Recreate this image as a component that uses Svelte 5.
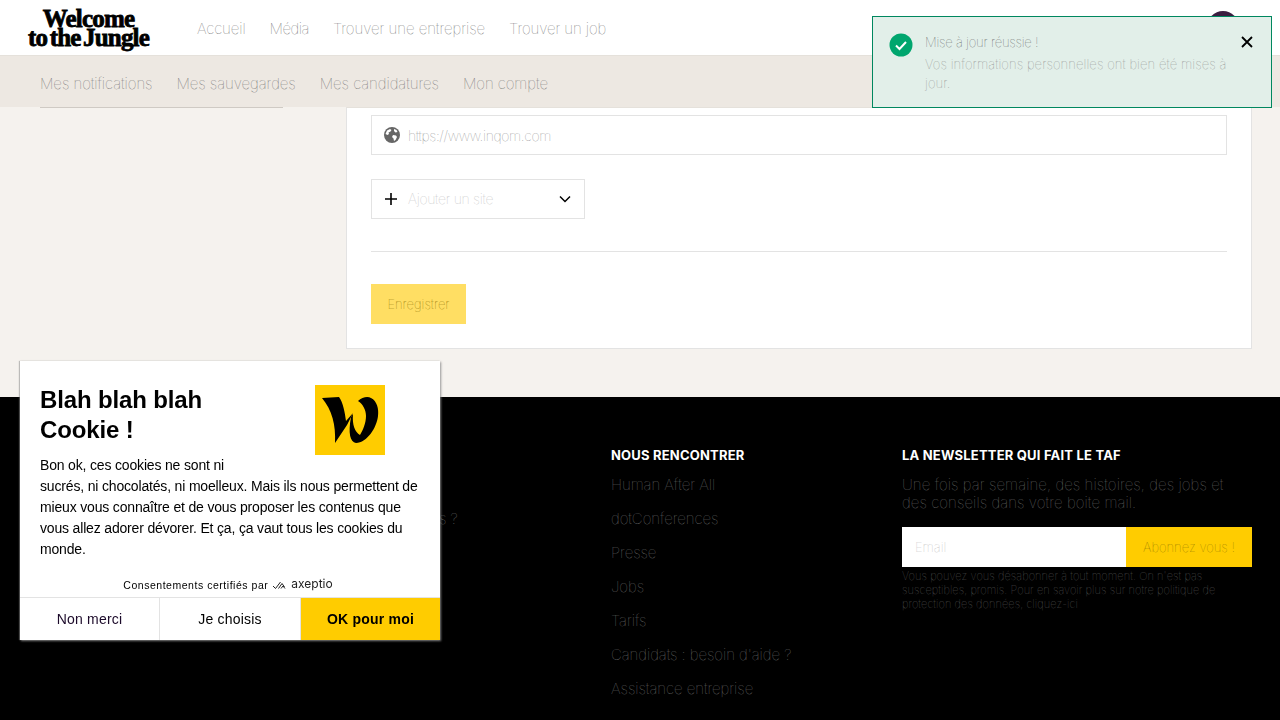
<script>
  const nav = ['Accueil', 'Média', 'Trouver une entreprise', 'Trouver un job'];
  const sub = ['Mes notifications', 'Mes sauvegardes', 'Mes candidatures', 'Mon compte'];
  const meet = ['Human After All', 'dotConferences', 'Presse', 'Jobs', 'Tarifs', 'Candidats : besoin d\'aide ?', 'Assistance entreprise'];
</script>

<header class="top">
  <div class="logo"><span>Welcome</span><span>to the Jungle</span></div>
  <nav class="mainnav">
    {#each nav as n}<span>{n}</span>{/each}
  </nav>
  <div class="avatar"></div>
</header>
<nav class="subnav">
  {#each sub as s}<span>{s}</span>{/each}
</nav>

<main class="page">
  <aside class="side"></aside>
  <section class="card">
    <div class="field wide">
      <svg class="globe" width="16" height="16" viewBox="0 0 16 16">
        <circle cx="8" cy="8" r="8" fill="#666"/>
        <path d="M3 3.500l3-1.500 1.500 1-1 1.500-2 1 .5 1.500-1.500 1L1.500 7zM9 8l3 .5 1 1.500-1.500 3-1.500 1-.5-2.500-1.500-1.500zM10 2l2.500 1 1 2-2 .5-1.500-1.500z" fill="#fff"/>
      </svg>
      <span class="url">https://www.inqom.com</span>
    </div>
    <div class="field select">
      <svg width="14" height="14" viewBox="0 0 14 14"><path d="M7 1v12M1 7h12" stroke="#000" stroke-width="1.600"/></svg>
      <span class="placeholder">Ajouter un site</span>
      <svg class="chev" width="14" height="14" viewBox="0 0 14 14"><path d="M2 4.500l5 5 5-5" fill="none" stroke="#000" stroke-width="1.500"/></svg>
    </div>
    <hr />
    <button class="save">Enregistrer</button>
  </section>
</main>

<footer class="foot">
  <div class="col"></div>
  <div class="col">
    <h4>&nbsp;</h4>
    <ul><li>&nbsp;</li><li>Besoin de conseils ?</li></ul>
  </div>
  <div class="col">
    <h4>NOUS RENCONTRER</h4>
    <ul>{#each meet as m}<li>{m}</li>{/each}</ul>
  </div>
  <div class="col news">
    <h4>LA NEWSLETTER QUI FAIT LE TAF</h4>
    <p class="pitch">Une fois par semaine, des histoires, des jobs et des conseils dans votre boite mail.</p>
    <div class="sub">
      <span class="email">Email</span>
      <span class="go">Abonnez vous !</span>
    </div>
    <p class="legal">Vous pouvez vous désabonner à tout moment. On n'est pas susceptibles, promis. Pour en savoir plus sur notre politique de protection des données, cliquez-ici</p>
  </div>
</footer>

<div class="toast">
  <svg class="ok" width="24" height="24" viewBox="0 0 24 24">
    <circle cx="12" cy="12" r="11.500" fill="#00a66e"/>
    <path d="M7 12.500l3.500 3.500L17 9" fill="none" stroke="#fff" stroke-width="2"/>
  </svg>
  <div class="msg">
    <div class="t1">Mise à jour réussie !</div>
    <div class="t2">Vos informations personnelles ont bien été mises à jour.</div>
  </div>
  <svg class="close" width="12" height="12" viewBox="0 0 12 12"><path d="M1 1l10 10M11 1L1 11" stroke="#000" stroke-width="1.800"/></svg>
</div>

<div class="cookie">
  <div class="cbody">
    <div class="mark">
      <svg width="70" height="70" viewBox="0 0 70 70">
        <rect width="70" height="70" fill="#ffcc00"/>
        <path d="M7 13L24 12C28 17 30 28 31 36L38 28L32 40L20 58C21 40 17 25 7 13Z" fill="#000"/>
        <path d="M43 16C47 12 53 11 56 13C62 16 64 24 63 31C62 42 52 58 41 58C35 57 33 48 36 32L38 29C37 40 40 47 45 50C48 45 51 38 51 31C51 25 48 19 43 16Z" fill="#000"/>
      </svg>
    </div>
    <h2>Blah blah blah<br />Cookie !</h2>
    <p>Bon ok, ces cookies ne sont ni<br />sucrés, ni chocolatés, ni moelleux. Mais ils nous permettent de mieux vous connaître et de vous proposer les contenus que vous allez adorer dévorer. Et ça, ça vaut tous les cookies du monde.</p>
  </div>
  <div class="cert"><span class="certtxt">Consentements certifiés par</span>
    <svg width="14" height="9" viewBox="0 0 14 9"><path d="M1 5l2.500 2.500L8.500 1M6.500 7.500L10 2.500L12.500 6M9 7.500L11 5L13 7.500" fill="none" stroke="#222" stroke-width="1"/></svg>
    <span class="axe">axeptio</span>
  </div>
  <div class="cbtns">
    <span class="b no">Non merci</span>
    <span class="b mid">Je choisis</span>
    <span class="b yes">OK pour moi</span>
  </div>
</div>

<style>
  :global(body) {
    margin: 0;
    overflow: hidden;
    background: #f5f2ee;
    font-family: Inter, "Liberation Sans", sans-serif;
    font-weight: 100;
    color: #000;
  }
  .top {
    height: 55px;
    border-bottom: 1px solid #e5e1db;
    background: #fff;
    display: flex;
    align-items: center;
    padding-left: 28px;
  }
  .logo {
    width: 121px;
    display: flex;
    flex-direction: column;
    align-items: center;
    font-family: "Liberation Serif", serif;
    font-weight: 700;
    font-size: 25px;
    line-height: 19px;
    letter-spacing: -0.8px;
    word-spacing: -3px;
    -webkit-text-stroke: 0.8px #000;
    white-space: nowrap;
  }
  .mainnav {
    margin-left: 48px;
    padding-top: 2px;
    display: flex;
    gap: 24px;
    font-size: 15px;
    letter-spacing: -0.1px;
    color: #666;
  }
  .mainnav span:nth-child(2) { letter-spacing: -0.5px; }
  .mainnav span:nth-child(3) { letter-spacing: -0.05px; }
  .avatar {
    position: absolute;
    left: 1207px;
    top: 11px;
    width: 32px;
    height: 32px;
    border-radius: 50%;
    background: #3b1d40;
  }
  .subnav {
    box-sizing: border-box;
    height: 51px;
    background: #ede8e2;
    display: flex;
    align-items: center;
    padding: 4px 0 0 40px;
    gap: 24px;
    font-size: 15px;
    letter-spacing: -0.05px;
    color: #666;
  }
  .page {
    display: flex;
    padding: 0 28px 48px 40px;
    gap: 63px;
    align-items: flex-start;
  }
  .side {
    width: 243px;
    border-top: 1px solid #cfcac4;
    flex: none;
  }
  .card {
    flex: 1;
    box-sizing: border-box;
    height: 242px;
    background: #fff;
    border: 1px solid #e3e3e3;
    border-top-color: #e5e1db;
    padding: 7px 24px 0;
  }
  .field {
    box-sizing: border-box;
    height: 40px;
    border: 1px solid #e3e3e3;
    display: flex;
    align-items: center;
    padding-left: 12px;
    gap: 8px;
    font-size: 14px;
  }
  .select {
    width: 214px;
    margin-top: 24px;
    padding-right: 12px;
    gap: 10px;
  }
  .url { color: #888; letter-spacing: -0.35px; }
  .placeholder { color: #bbb; letter-spacing: -0.3px; padding-bottom: 1px; }
  .chev { margin-left: auto; }
  hr {
    border: 0;
    height: 1px;
    background: #e3e3e3;
    margin: 32px 0;
  }
  .save {
    display: block;
    width: 95px;
    height: 40px;
    border: 0;
    padding: 0;
    background: #ffde63;
    font: inherit;
    font-size: 13px;
    color: #8a7000;
  }
  .foot {
    background: #000;
    height: 323px;
    box-sizing: border-box;
    padding: 48px 28px 0 29px;
    display: grid;
    grid-template-columns: 291px 291px 291px 350px;
    color: #777;
  }
  h4 {
    margin: 0;
    font-size: 13px;
    line-height: 20px;
    font-weight: 700;
    letter-spacing: 0.2px;
    color: #fff;
  }
  ul {
    list-style: none;
    margin: 5px 0 0;
    padding: 0;
    font-size: 15px;
    letter-spacing: -0.05px;
  }
  li {
    height: 34px;
    line-height: 30px;
    white-space: nowrap;
  }
  .pitch {
    margin: 11px 0 0;
    width: 335px;
    font-size: 15px;
    line-height: 18px;
    letter-spacing: 0.08px;
  }
  .sub {
    display: flex;
    height: 40px;
    margin-top: 15px;
    font-size: 13px;
    align-items: stretch;
  }
  .email {
    width: 224px;
    background: #fff;
    color: #bbb;
    padding-left: 13px;
    box-sizing: border-box;
    display: flex;
    align-items: center;
  }
  .go {
    flex: 1;
    background: #ffcc00;
    color: #8a7000;
    display: flex;
    align-items: center;
    justify-content: center;
  }
  .legal {
    margin: 2px 0 0;
    font-size: 11px;
    line-height: 14px;
    letter-spacing: 0.07px;
    color: #666;
  }
  .toast {
    position: fixed;
    left: 872px;
    top: 16px;
    width: 400px;
    height: 92px;
    box-sizing: border-box;
    background: #e2efe9;
    border: 1px solid #00875f;
    display: flex;
    padding: 16px 16px 0;
    gap: 12px;
  }
  .ok { flex: none; }
  .msg { flex: 1; margin-top: -1px; }
  .t1 { font-size: 13px; line-height: 20px; color: #555; letter-spacing: -0.2px; }
  .t2 { font-size: 13px; line-height: 19px; color: #888; margin-top: 3px; letter-spacing: 0.1px; }
  .close { flex: none; margin-top: 3px; margin-right: 2px; }
  .cookie {
    position: fixed;
    left: 20px;
    top: 361px;
    width: 420px;
    height: 279px;
    background: #fff;
    box-shadow: 1px 1px 2px 0 rgba(140, 140, 140, 0.9), -1px 0 1px 0 rgba(140, 140, 140, 0.5);
    display: flex;
    flex-direction: column;
    font-family: "Liberation Sans", Arial, sans-serif;
    font-weight: 400;
    color: #000;
  }
  .cbody {
    padding: 24px 20px 0;
    flex: 1;
  }
  .mark {
    float: right;
    width: 70px;
    height: 70px;
    margin: 0 35px 0 20px;
  }
  .mark svg { display: block; }
  h2 {
    margin: 0 0 10px;
    font-size: 24px;
    line-height: 30px;
    font-weight: 700;
    letter-spacing: -0.15px;
  }
  .cbody p {
    margin: 0;
    font-size: 14px;
    line-height: 21px;
    letter-spacing: -0.17px;
  }
  .cert {
    display: flex;
    justify-content: center;
    align-items: center;
    gap: 4px;
    font-size: 10.500px;
    line-height: 14px;
    margin-bottom: 5px;
    padding-right: 4px;
  }
  .certtxt { letter-spacing: 0.53px; }
  .axe {
    font-family: Inter, sans-serif;
    font-size: 12px;
    font-weight: 400;
    color: #222;
    margin-left: 1px;
    margin-top: -2px;
  }
  .cbtns {
    display: flex;
    height: 42px;
    border-top: 1px solid #e3e3e3;
    font-size: 14px;
  }
  .b {
    display: flex;
    align-items: center;
    justify-content: center;
    letter-spacing: 0.2px;
  }
  .no { width: 139px; border-right: 1px solid #e3e3e3; color: #1c0a2a; }
  .mid { width: 140px; border-right: 1px solid #e3e3e3; }
  .yes { flex: 1; background: #ffcc00; font-weight: 700; }
</style>
